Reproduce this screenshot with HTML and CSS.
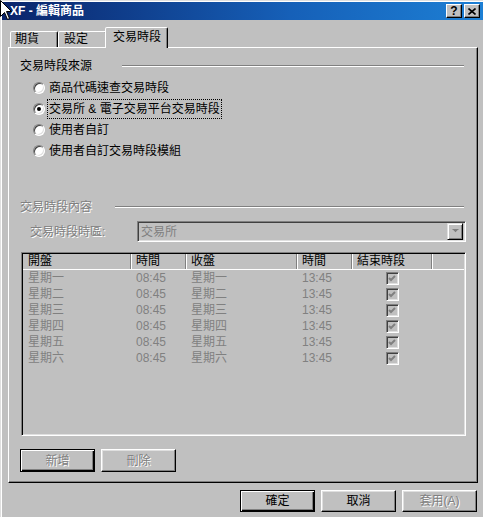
FILE: index.html
```html
<!doctype html>
<html lang="zh-Hant">
<head>
<meta charset="utf-8" />
<title>XF - 編輯商品</title>
<link rel="stylesheet" href="styles.css">
</head>
<body>
<div class="window">
  <div class="titlebar">
    <span class="title">XF - 編輯商品</span>
    <div class="title-btns">
      <span class="tbtn">?</span>
      <span class="tbtn">
        <svg width="8" height="7" viewBox="0 0 8 7"><path d="M0.5 0.5 L7.5 6.5 M7.5 0.5 L0.5 6.5" stroke="#000" stroke-width="1.6" fill="none"/></svg>
      </span>
    </div>
  </div>

  <div class="tabs">
    <div class="tab tab-a">期貨</div>
    <div class="tab tab-b">設定</div>
    <div class="tab active">交易時段</div>
  </div>

  <div class="panel">
    <div class="group-title">
      <span>交易時段來源</span><i class="etch etch-a"></i>
    </div>
    <div class="radios">
      <div class="radio-row"><span class="radio"></span><span class="rlabel">商品代碼速查交易時段</span></div>
      <div class="radio-row"><span class="radio checked"></span><span class="rlabel focus">交易所 &amp; 電子交易平台交易時段</span></div>
      <div class="radio-row"><span class="radio"></span><span class="rlabel">使用者自訂</span></div>
      <div class="radio-row"><span class="radio"></span><span class="rlabel">使用者自訂交易時段模組</span></div>
    </div>

    <div class="group-title group-two disabled">
      <span>交易時段內容</span><i class="etch etch-b"></i>
    </div>
    <div class="combo-row">
      <span class="combo-label disabled">交易時段時區:</span>
      <div class="combo">
        <span class="combo-text">交易所</span>
        <span class="combo-btn">
          <svg width="7" height="5" viewBox="0 0 7 5"><path d="M1 1 H6 L3.5 3.5 Z" fill="#fff"/><path d="M0 0 H7 L3.5 3.5 Z" fill="#808080"/></svg>
        </span>
      </div>
    </div>

    <div class="listview">
      <div class="lv-row lv-head">
        <span>開盤</span><span>時間</span><span>收盤</span><span>時間</span><span>結束時段</span><span></span>
      </div>
      <div class="lv-row"><span>星期一</span><span>08:45</span><span>星期一</span><span>13:45</span><span class="cb-cell"><i class="cb"></i></span><span></span></div>
      <div class="lv-row"><span>星期二</span><span>08:45</span><span>星期二</span><span>13:45</span><span class="cb-cell"><i class="cb"></i></span><span></span></div>
      <div class="lv-row"><span>星期三</span><span>08:45</span><span>星期三</span><span>13:45</span><span class="cb-cell"><i class="cb"></i></span><span></span></div>
      <div class="lv-row"><span>星期四</span><span>08:45</span><span>星期四</span><span>13:45</span><span class="cb-cell"><i class="cb"></i></span><span></span></div>
      <div class="lv-row"><span>星期五</span><span>08:45</span><span>星期五</span><span>13:45</span><span class="cb-cell"><i class="cb"></i></span><span></span></div>
      <div class="lv-row"><span>星期六</span><span>08:45</span><span>星期六</span><span>13:45</span><span class="cb-cell"><i class="cb"></i></span><span></span></div>
    </div>

    <div class="btn-row">
      <button class="btn default off" tabindex="-1">新增</button>
      <button class="btn off" tabindex="-1">刪除</button>
    </div>
  </div>

  <div class="footer">
    <button class="btn default">確定</button>
    <button class="btn">取消</button>
    <button class="btn off">套用(A)</button>
  </div>

  <!-- mouse pointer sitting over the title bar -->
  <svg class="cursor" width="13" height="21" viewBox="0 0 13 21">
    <path d="M0.5 0.5 V16.5 L4.5 12.5 L7.5 19.5 L9.5 18.5 L6.5 11.5 H11.5 Z" fill="#fff" stroke="#000" stroke-width="1"/>
  </svg>
</div>
</body>
</html>
```

FILE: styles.css
```css
:root{
  --face:#c0c0c0;
  --light:#dfdfdf;
  --hi:#fff;
  --shadow:#808080;
  --dark:#000;
  --dis:#808080;
}
*{box-sizing:border-box}
body{
  margin:0;background:var(--face);
  font:12px/16px "Liberation Sans","Noto Sans CJK TC",sans-serif;color:#000;
}
.window{
  position:relative;width:483px;height:517px;overflow:hidden;
  padding:2px 0 0 2px;background:var(--face);
  box-shadow:inset 1px 1px var(--light),inset 2px 2px var(--hi);
}

/* title bar */
.titlebar{
  height:18px;display:flex;align-items:center;justify-content:space-between;
  padding:0 3px 0 8px;
  background:linear-gradient(to right,#0a246a 0%,#1660b8 60%,#1d7fd4 100%);
  color:#fff;font-weight:bold;
}
.title{line-height:18px}
.title-btns{display:flex;gap:2px}
.tbtn{
  width:16px;height:14px;display:flex;align-items:center;justify-content:center;
  background:var(--face);color:#000;font-size:12px;line-height:14px;font-weight:bold;
  border:1px solid;border-color:var(--hi) var(--dark) var(--dark) var(--hi);
  box-shadow:inset -1px -1px var(--shadow);
}

/* tabs */
.tabs{display:flex;align-items:flex-end;height:20px;margin:7px 0 0 8px;position:relative;z-index:1}
.tab{
  height:16px;padding-left:4px;line-height:14px;
  border:1px solid;border-bottom:none;border-color:var(--hi) var(--dark) transparent var(--hi);
  border-radius:2px 2px 0 0;box-shadow:inset -1px 0 var(--shadow);
  background:var(--face);
}
.tab-a{width:48px}
.tab-b{width:49px;padding-left:5px}
.tab.active{
  width:63px;height:21px;margin:0 0 -1px -2px;padding-left:7px;line-height:18px;
  position:relative;z-index:2;
}

/* tab page */
.panel{
  width:470px;height:436px;margin-left:6px;
  padding:0 11px 0 11px;
  border:1px solid;border-color:var(--hi) var(--dark) var(--dark) var(--hi);
  box-shadow:inset -1px -1px var(--shadow);
  display:flex;flex-direction:column;
}
.group-title{display:flex;align-items:center;height:16px;margin-top:10px}
.group-two{margin-top:38px}
.etch{flex:1;height:2px;margin-right:2px;border-top:1px solid var(--shadow);border-bottom:1px solid var(--hi)}
.etch-a{margin-left:30px}
.etch-b{margin-left:23px}
.disabled{color:var(--dis);text-shadow:1px 1px var(--hi)}

.radios{margin-top:3px;padding-left:13px}
.radio-row{height:21px;display:flex;align-items:center}
.radio{
  width:12px;height:12px;border-radius:50%;background:#fff;flex:none;
  border:1px solid;border-color:var(--shadow) var(--hi) var(--hi) var(--shadow);
  box-shadow:inset 1px 1px #404040,inset -1px -1px var(--light);
  display:flex;align-items:center;justify-content:center;
}
.radio.checked::after{content:"";width:4px;height:4px;border-radius:50%;background:#000}
.rlabel{margin-left:2px;padding:1px 1px;border:1px solid transparent}
.rlabel.focus{border:1px dotted #000}

.combo-row{display:flex;align-items:center;height:21px;margin-top:6px}
.combo-label{width:117px;padding-left:10px}
.combo{
  flex:1;height:21px;display:flex;align-items:center;justify-content:space-between;
  border:1px solid;border-color:var(--shadow) var(--hi) var(--hi) var(--shadow);
  box-shadow:inset 1px 1px #404040,inset -1px -1px var(--light);
  padding:2px 2px 2px 3px;color:var(--dis);
}
.combo-btn{
  width:16px;height:17px;display:flex;align-items:center;justify-content:center;
  border:1px solid;border-color:var(--light) var(--dark) var(--dark) var(--light);
  box-shadow:inset 1px 1px var(--hi),inset -1px -1px var(--shadow);
}

/* list view */
.listview{
  height:184px;margin:10px 0 0 1px;
  border:1px solid;border-color:var(--shadow) var(--hi) var(--hi) var(--shadow);
  box-shadow:inset 1px 1px #000,inset -1px -1px var(--light);
  padding:1px;
}
.lv-row{display:grid;grid-template-columns:108px 55px 111px 55px 80px 1fr;height:16px;color:var(--dis)}
.lv-row span{padding-left:5px;white-space:nowrap;line-height:16px}
.lv-head{color:#000;border-bottom:1px solid var(--hi)}
.lv-head span{border-right:1px solid var(--shadow);box-shadow:inset 1px 0 var(--hi);line-height:15px}
.lv-head span:first-child{box-shadow:none}
.lv-head span:last-child{border-right:none}
.cb-cell{display:flex;align-items:center;justify-content:center;padding-left:0 !important}
.cb{
  width:13px;height:13px;display:block;
  border:1px solid;border-color:var(--shadow) var(--hi) var(--hi) var(--shadow);
  box-shadow:inset 1px 1px #404040,inset -1px -1px var(--light);
  background:var(--face) url("data:image/svg+xml,%3Csvg xmlns='http://www.w3.org/2000/svg' width='11' height='11'%3E%3Cpath d='M2 5 L4 7 L8 3' stroke='%23808080' stroke-width='2' fill='none'/%3E%3C/svg%3E") center/11px 11px no-repeat;
}

/* buttons */
.btn-row{display:flex;gap:6px;margin-top:13px}
.btn{
  width:75px;height:23px;padding:0;font:inherit;background:var(--face);color:#000;
  border:1px solid;border-color:var(--hi) var(--dark) var(--dark) var(--hi);
  box-shadow:inset -1px -1px var(--shadow),inset 1px 1px var(--light);
}
.btn.default{
  border:1px solid #000;
  box-shadow:inset 1px 1px var(--hi),inset -1px -1px #000,inset -2px -2px var(--shadow);
}
.btn.off{color:var(--dis);text-shadow:1px 1px var(--hi)}
.footer{display:flex;justify-content:flex-end;gap:6px;margin-top:7px;padding-right:6px}
.footer .btn{height:22px}

.cursor{position:absolute;left:0;top:0}
```
